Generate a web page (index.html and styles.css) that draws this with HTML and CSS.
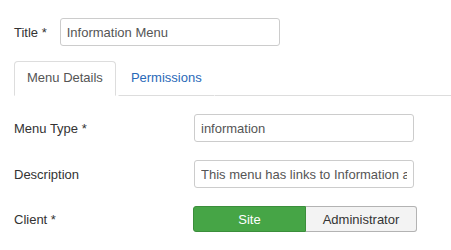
FILE: index.html
```html
<!DOCTYPE html>
<html lang="en">
<head>
    <meta charset="UTF-8">
    <meta name="viewport" content="width=device-width, initial-scale=1.0">
    <title>Edit Menu</title>
    <link rel="stylesheet" href="styles.css">
</head>
<body>
    <div class="page">
        <div class="title-row">
            <label for="title">Title *</label>
            <input type="text" id="title" class="input" value="Information Menu">
        </div>
        <ul class="nav-tabs">
            <li class="tab active">Menu Details</li>
            <li class="tab"><a href="#">Permissions</a></li>
            <li class="tab-fill"></li>
        </ul>
        <div class="tab-content">
            <div class="control-group">
                <label class="control-label" for="menutype">Menu Type *</label>
                <input type="text" id="menutype" class="input" value="information">
            </div>
            <div class="control-group">
                <label class="control-label" for="description">Description</label>
                <input type="text" id="description" class="input" value="This menu has links to Information about the site">
            </div>
            <div class="control-group">
                <span class="control-label">Client *</span>
                <div class="btn-group">
                    <button type="button" class="btn site">Site</button>
                    <button type="button" class="btn admin">Administrator</button>
                </div>
            </div>
        </div>
    </div>
</body>
</html>
```

FILE: styles.css
```css
body {
    margin: 0;
    background: #fff;
    font-family: 'Liberation Sans', Arial, sans-serif;
    font-size: 13px;
    color: #333;
}
.page {
    padding: 18px 0 0 14px;
}
.title-row {
    display: flex;
    align-items: center;
    gap: 13px;
}
.input {
    width: 220px;
    height: 28px;
    padding: 4px 6px;
    border: 1px solid #ccc;
    border-radius: 3px;
    font-family: inherit;
    font-size: 13px;
    color: #555;
    background: #fff;
    box-sizing: border-box;
    outline: none;
}
.nav-tabs {
    display: flex;
    list-style: none;
    margin: 15px 0 0 0;
    padding: 0;
}
.tab {
    padding: 0 12px;
    height: 33px;
    line-height: 32px;
    margin-right: 2px;
    border: 1px solid transparent;
    border-bottom: 1px solid #ddd;
    border-radius: 4px 4px 0 0;
}
.tab.active {
    color: #555;
    border-color: #ddd;
    border-bottom-color: transparent;
    background: #fff;
}
.tab a {
    color: #2a69b8;
    text-decoration: none;
}
.tab-fill {
    flex: 1;
    border-bottom: 1px solid #ddd;
    margin-left: -2px;
}
.tab-content {
    padding-top: 18px;
}
.control-group {
    display: flex;
    align-items: center;
    margin-bottom: 18px;
}
.control-label {
    width: 180px;
}
.btn-group {
    display: flex;
    margin-left: -1px;
}
.btn {
    height: 26px;
    padding: 0;
    font-family: inherit;
    font-size: 13px;
    cursor: pointer;
}
.btn.site {
    width: 113px;
    color: #fff;
    background: #46a546;
    border: 1px solid #3b8e3b;
    border-radius: 3px 0 0 3px;
}
.btn.admin {
    width: 111px;
    color: #333;
    background: #f3f3f3;
    border: 1px solid #b3b3b3;
    border-left: none;
    border-radius: 0 3px 3px 0;
}
```
